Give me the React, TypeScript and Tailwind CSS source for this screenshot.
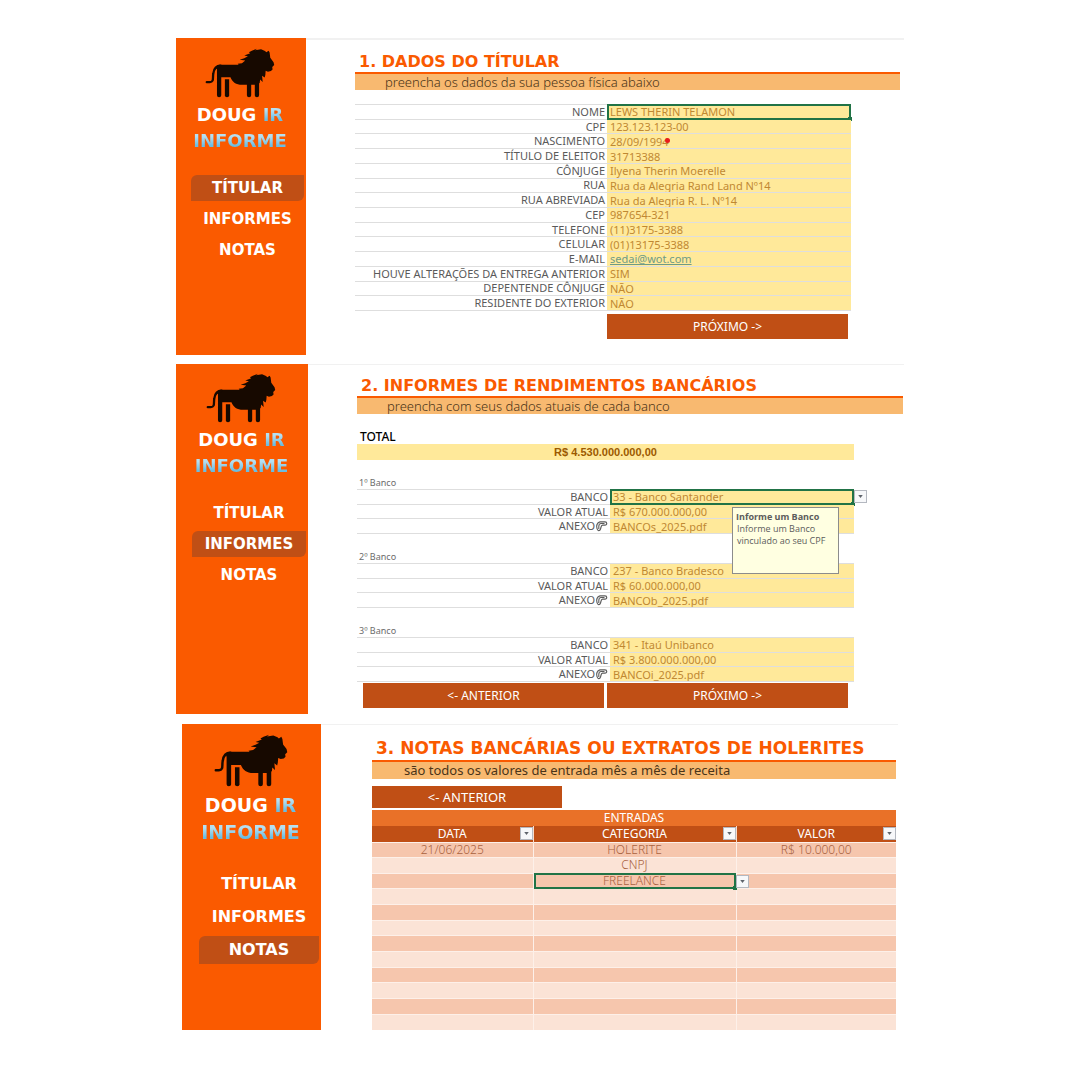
import type { ReactNode } from 'react';

function Lion({ className }: { className: string }) {
  return (
    <svg viewBox="14 22 212 152" className={className} fill="#170900" aria-hidden="true">
      <path d="M56 73H116L113 70L126 68L136 60L119 58L133 53L144 47L133 45L151 38L147 35L156 30L172 24L166 29L184 26L196 31L200 35L207 30L210 36L212 52L222 65L224 74L218 80L219 87L214 92L205 94L198 91L197 104L195 112L187 106L189 125L181 118L180 128L178 130V166Q178 172 171.500 172Q165 172 165 166V134H154V166Q154 172 147.500 172Q141 172 141 166V134H126C108 134 97 126 91 111H63V166Q63 172 56.500 172Q50 172 50 166V86H47Z" />
      <path d="M74 117H87V166Q87 172 80.500 172Q74 172 74 166Z" />
      <path d="M19 126H28C42 125 36 112 39 99C41 84 47 76 61 76" fill="none" stroke="#170900" strokeWidth="7" strokeLinecap="round" />
    </svg>
  );
}

function Arrow({ className }: { className: string }) {
  return (
    <span className={`${className} flex items-center justify-center border border-[#b4b8c0] bg-[#f7f8fa]`}>
      <svg viewBox="0 0 6 4" className="h-[3px] w-[5px]" fill="#5f646c" aria-hidden="true">
        <path d="M0 0H6L3 4Z" />
      </svg>
    </span>
  );
}

function Clip() {
  return (
    <svg viewBox="0 0 13 12" className="h-3 w-[13px] shrink-0" fill="none" stroke="#5c5c5c" aria-hidden="true">
      <path d="M2 8.500C1 6 2 2.500 5 1.800H10C12.300 1.800 12.300 5.200 10 5.200H7.500C6 5.200 6.200 7 5.500 9C4.800 11.200 2.500 11.200 2 8.500Z" strokeWidth="1.200" />
      <path d="M3.800 9V6.500C3.800 4.300 4.800 3.500 6 3.500H9.500" strokeWidth="1.100" />
    </svg>
  );
}

const pages = ['TÍTULAR', 'INFORMES', 'NOTAS'];

function Sidebar({ active, large, className }: { active: string; large?: boolean; className: string }) {
  return (
    <aside className={`${className} shrink-0 bg-[#fa5a00] font-['DejaVu_Sans',sans-serif] font-bold`}>
      <Lion className={large ? 'ml-8 h-[53px] w-[74px]' : 'ml-[29px] h-[50px] w-[70px]'} />
      <h1
        className={
          large
            ? 'mr-[2px] mt-[5px] text-center text-[19px] leading-[27px] font-black text-white'
            : 'mr-[2px] mt-[4px] text-center text-[18px] leading-[26px] font-black text-white'
        }
      >
        DOUG{' '}
        <span className="bg-linear-to-b from-[#b5e0f2] from-30% to-[#69bde2] to-75% bg-clip-text text-transparent">IR</span>
        <br />
        <span className="bg-linear-to-b from-[#b5e0f2] from-30% to-[#69bde2] to-75% bg-clip-text text-transparent">INFORME</span>
      </h1>
      <nav className={large ? 'mt-6 mr-[2px] ml-[17px] flex flex-col gap-[5px]' : 'mt-[21px] mr-[2px] ml-[15px] flex flex-col gap-[5px]'}>
        {pages.map((p) => (
          <a
            key={p}
            href={'#' + p.toLowerCase()}
            className={`${p === active ? 'bg-[#c04f15]' : ''} ${large ? 'h-7 text-[16px]' : 'h-[26px] text-[15px]'} flex items-center justify-center rounded-tl-md rounded-br-md text-white`}
          >
            {p}
          </a>
        ))}
      </nav>
    </aside>
  );
}

function Heading({ title, sub, large }: { title: string; sub: string; large?: boolean }) {
  return (
    <header>
      <h2
        className={`${large ? 'pb-[2px] text-[17px]' : 'text-[16px]'} pl-1 leading-[20px] font-bold whitespace-nowrap text-[#fa5a00] font-['DejaVu_Sans',sans-serif]`}
      >
        {title}
      </h2>
      <p
        className={`${large ? 'h-[19px] pl-8 font-normal' : 'h-[18px] pl-[30px]'} border-t-2 border-[#fa5a00] bg-[#f8b970] text-[13px] leading-[16px] text-[#4a3418]`}
      >
        {sub}
      </p>
    </header>
  );
}

function Row({ id, label, icon, children }: { id: string; label: string; icon?: ReactNode; children: ReactNode }) {
  return (
    <div className="flex min-h-0 flex-1 border-b border-[#dedede] text-[11px] font-normal">
      <label htmlFor={id} className="flex min-w-0 flex-1 items-center justify-end pr-[2px] whitespace-nowrap text-[#5a5a5a]">
        {label}
        {icon}
      </label>
      <div className="relative flex w-[244px] shrink-0 items-center bg-[#ffe99a] text-[#bf8832]">{children}</div>
    </div>
  );
}

function Field({ id, value, selected }: { id: string; value: string; selected?: boolean }) {
  return (
    <>
      <input id={id} defaultValue={value} className="h-full w-full min-w-0 bg-transparent pl-[3px] outline-none" />
      {selected && <Selection />}
    </>
  );
}

function Selection() {
  return (
    <span className="pointer-events-none absolute inset-x-0 -inset-y-px border-2 border-[#217346]">
      <span className="absolute -right-[3px] -bottom-[3px] h-[4px] w-[4px] bg-[#217346]" />
    </span>
  );
}

const holder: [string, string, string][] = [
  ['nome', 'NOME', 'LEWS THERIN TELAMON'],
  ['cpf', 'CPF', '123.123.123-00'],
  ['nascimento', 'NASCIMENTO', '28/09/1994'],
  ['titulo', 'TÍTULO DE ELEITOR', '31713388'],
  ['conjuge', 'CÔNJUGE', 'Ilyena Therin Moerelle'],
  ['rua', 'RUA', 'Rua da Alegria Rand Land Nº14'],
  ['rua-abreviada', 'RUA ABREVIADA', 'Rua da Alegria R. L. Nº14'],
  ['cep', 'CEP', '987654-321'],
  ['telefone', 'TELEFONE', '(11)3175-3388'],
  ['celular', 'CELULAR', '(01)13175-3388'],
  ['email', 'E-MAIL', 'sedai@wot.com'],
  ['alteracoes', 'HOUVE ALTERAÇÕES DA ENTREGA ANTERIOR', 'SIM'],
  ['dependente', 'DEPENTENDE CÔNJUGE', 'NÃO'],
  ['exterior', 'RESIDENTE DO EXTERIOR', 'NÃO'],
];

const banks = [
  { n: '1º Banco', bank: '33 - Banco Santander', value: 'R$ 670.000.000,00', file: 'BANCOs_2025.pdf' },
  { n: '2º Banco', bank: '237 - Banco Bradesco', value: 'R$ 60.000.000,00', file: 'BANCOb_2025.pdf' },
  { n: '3º Banco', bank: '341 - Itaú Unibanco', value: 'R$ 3.800.000.000,00', file: 'BANCOi_2025.pdf' },
];

const entries = [
  ['21/06/2025', 'HOLERITE', 'R$ 10.000,00'],
  ['', 'CNPJ', ''],
  ['', 'FREELANCE', ''],
  ...Array.from({ length: 9 }, () => ['', '', '']),
];

export default function App() {
  return (
    <main className="flex min-h-screen flex-col items-center bg-white pt-[38px] pb-10 font-['Noto_Sans',sans-serif] text-[12px] leading-[14px] font-light">
      <section className="flex w-full max-w-[728px]">
        <Sidebar active="TÍTULAR" className="w-[130px] pt-[10px] pb-[92px]" />
        <div className="min-w-0 flex-1 border-t-2 border-[#f1f1f1] pt-[12px] pr-1 pl-[49px]">
          <Heading title="1. DADOS DO TÍTULAR" sub="preencha os dados da sua pessoa física abaixo" />
          <form className="mt-[14px] mr-[49px]">
            <div className="flex h-[207px] flex-col border-t border-[#dedede]">
              {holder.map(([id, label, value]) => (
                <Row key={id} id={id} label={label}>
                  {id === 'email' ? (
                    <a id={id} href="mailto:sedai@wot.com" className="pl-[3px] text-[#6f9b86] underline">
                      {value}
                    </a>
                  ) : (
                    <Field id={id} value={value} selected={id === 'nome'} />
                  )}
                  {id === 'nascimento' && <span className="absolute top-1 left-[58px] h-[5px] w-[5px] rounded-full bg-[#e81c1c]" />}
                </Row>
              ))}
            </div>
            <button type="button" className="mt-[3px] mr-[3px] ml-auto block h-[25px] w-[241px] bg-[#c04f15] font-normal text-white">
              PRÓXIMO -&gt;
            </button>
          </form>
        </div>
      </section>

      <section className="mt-[9px] flex w-full max-w-[728px]">
        <Sidebar active="INFORMES" className="w-[132px] pt-[9px] pb-[126px] pl-px" />
        <div className="min-w-0 flex-1 border-t border-[#f1f1f1] pt-[11px] pr-px pl-[49px]">
          <Heading title="2. INFORMES DE RENDIMENTOS BANCÁRIOS" sub="preencha com seus dados atuais de cada banco" />
          <form className="mt-4 mr-[49px]">
            <h3 className="pl-[3px] font-medium text-black">TOTAL</h3>
            <output className="block h-4 bg-[#ffe99a] text-center font-['Liberation_Sans',sans-serif] text-[11px] leading-4 font-bold text-[#9c5a00]">
              R$ 4.530.000.000,00
            </output>
            {banks.map((b, i) => (
              <fieldset key={b.n}>
                <legend className="h-[29px] pt-[16px] pl-[2px] text-[9px] leading-[14px] font-normal text-[#6b6b6b]">{b.n}</legend>
                <div className="flex h-[45px] flex-col border-t border-[#dedede]">
                  <Row id={'banco' + i} label="BANCO">
                    <select id={'banco' + i} defaultValue={b.bank} className="h-full w-full appearance-none bg-transparent pl-[3px] outline-none">
                      {banks.map((o) => (
                        <option key={o.bank}>{o.bank}</option>
                      ))}
                    </select>
                    {i === 0 && (
                      <>
                        <Selection />
                        <Arrow className="absolute top-0 left-full h-[13px] w-[13px]" />
                        <div
                          role="tooltip"
                          className="absolute top-[17px] left-[122px] z-10 h-[67px] w-[107px] border border-[#8c8c8c] bg-[#ffffe1] px-[3px] py-[3px] font-['Open_Sans',sans-serif] text-[9px] leading-[12px] font-normal whitespace-nowrap text-[#5c5c5c]"
                        >
                          <strong className="block">Informe um Banco</strong>
                          <span className="block pl-px">Informe um Banco</span>
                          <span className="block pl-px">vinculado ao seu CPF</span>
                        </div>
                      </>
                    )}
                  </Row>
                  <Row id={'valor' + i} label="VALOR ATUAL">
                    <Field id={'valor' + i} value={b.value} />
                  </Row>
                  <Row id={'anexo' + i} label="ANEXO" icon={<Clip />}>
                    <Field id={'anexo' + i} value={b.file} />
                  </Row>
                </div>
              </fieldset>
            ))}
            <div className="mt-px mr-[6px] ml-[6px] flex gap-[3px] text-white">
              <button type="button" className="h-[25px] flex-1 bg-[#c04f15] font-normal">
                &lt;- ANTERIOR
              </button>
              <button type="button" className="h-[25px] flex-1 bg-[#c04f15] font-normal">
                PRÓXIMO -&gt;
              </button>
            </div>
          </form>
        </div>
      </section>

      <section className="mt-[10px] flex w-full max-w-[716px]">
        <Sidebar active="NOTAS" large className="w-[139px] pt-[10px]" />
        <div className="min-w-0 flex-1 border-t border-[#f1f1f1] pt-[13px] pr-[2px] pl-[51px]">
          <Heading large title="3. NOTAS BANCÁRIAS OU EXTRATOS DE HOLERITES" sub="são todos os valores de entrada mês a mês de receita" />
          <button type="button" className="mt-[7px] block h-[22px] w-[190px] bg-[#c04f15] pb-px text-[13px] font-normal text-white">
            &lt;- ANTERIOR
          </button>
          <table className="mt-[2px] h-[220px] w-full table-fixed border-collapse text-center">
            <colgroup>
              <col className="w-[161px]" />
              <col className="w-[203px]" />
              <col />
            </colgroup>
            <thead className="text-[12px] text-white">
              <tr className="h-4 bg-[#e97128]">
                <th colSpan={3} className="p-0 font-normal">
                  ENTRADAS
                </th>
              </tr>
              <tr className="h-4 bg-[#c04f15]">
                {['DATA', 'CATEGORIA', 'VALOR'].map((h) => (
                  <th key={h} className="relative border-r border-[#f8dccb] p-0 font-normal last:border-r-0">
                    {h}
                    <button type="button" aria-label={'Filtrar ' + h} className="absolute top-px right-0">
                      <Arrow className="h-[13px] w-[13px]" />
                    </button>
                  </th>
                ))}
              </tr>
            </thead>
            <tbody className="text-[#a8623f]">
              {entries.map((row, i) => (
                <tr key={i} className="h-[15px] border-t border-[#fdf0e9] odd:bg-[#f6c6ad] even:bg-[#fbe3d6]">
                  {row.map((c, j) => (
                    <td key={j} className="relative border-r border-[#fdf0e9] p-0 last:border-r-0">
                      {c === 'FREELANCE' ? (
                        <>
                          <select aria-label="Categoria" defaultValue={c} className="block h-[14px] w-full appearance-none bg-transparent text-center outline-none">
                            <option>HOLERITE</option>
                            <option>CNPJ</option>
                            <option>FREELANCE</option>
                          </select>
                          <Selection />
                          <Arrow className="absolute top-px left-full h-[13px] w-[13px]" />
                        </>
                      ) : (
                        c
                      )}
                    </td>
                  ))}
                </tr>
              ))}
            </tbody>
          </table>
        </div>
      </section>
    </main>
  );
}
